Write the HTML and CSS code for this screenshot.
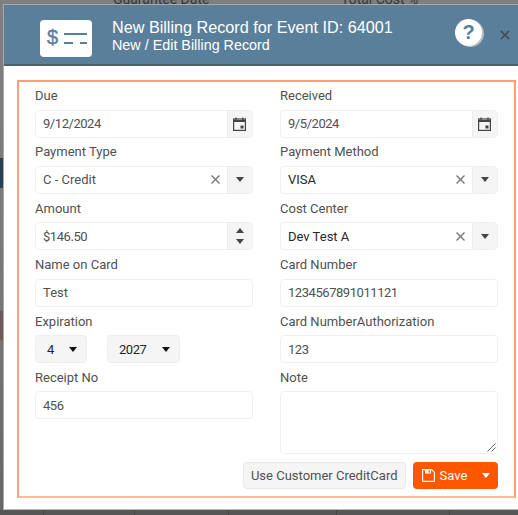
FILE: index.html
```html
<!doctype html>
<html>

<head>
    <link rel="stylesheet" href="styles.css">
</head>

<body>
    <div class="page-behind">
        <span class="back-label back-left">Guarantee Date</span>
        <span class="back-label back-right">Total Cost %</span>
        <span class="back-block back-navy"></span>
        <span class="back-block back-brown"></span>
        <div class="back-foot">
            <span class="back-cell"></span>
            <span class="back-cell"></span>
            <span class="back-cell"></span>
            <span class="back-cell"></span>
            <span class="back-cell"></span>
        </div>
    </div>
    <div class="window">
        <div class="titlebar">
            <div class="logo">
                <svg width="52" height="37" viewBox="0 0 52 37">
                    <rect x="0" y="0" width="52" height="37" rx="4" fill="#fff" />
                    <text x="7" y="24" class="logo-text">$</text>
                    <rect x="24" y="13" width="23" height="2" fill="#5a7f9b" />
                    <rect x="24" y="22" width="9" height="2" fill="#5a7f9b" />
                    <rect x="40" y="22" width="7" height="2" fill="#5a7f9b" />
                </svg>
            </div>
            <div class="titles">
                <div class="title-main">New Billing Record for Event ID: 64001</div>
                <div class="title-sub">New / Edit Billing Record</div>
            </div>
            <div class="help">?</div>
            <svg class="close" width="10" height="10" viewBox="0 0 10 10">
                <path d="M1 1 L9 9 M9 1 L1 9" stroke="#3f4a52" stroke-width="1.6" />
            </svg>
        </div>
        <div class="content">
            <div class="form-box">
                <div class="form-grid">
                    <div class="field">
                        <label>Due</label>
                        <div class="widget">
                            <span class="value num">9/12/2024</span>
                            <span class="side">
                                <svg width="13" height="14" viewBox="0 0 13 14">
                                    <path d="M3 0.5 V3 M10 0.5 V3" stroke="#444" stroke-width="1.3" fill="none" />
                                    <rect x="0.6" y="2" width="11.8" height="11.4" fill="none" stroke="#444" stroke-width="1.2" />
                                    <rect x="0.6" y="3" width="11.8" height="2" fill="#444" />
                                    <rect x="7.5" y="8.5" width="3" height="3" fill="#444" />
                                </svg>
                            </span>
                        </div>
                    </div>
                    <div class="field">
                        <label>Received</label>
                        <div class="widget">
                            <span class="value num">9/5/2024</span>
                            <span class="side">
                                <svg width="13" height="14" viewBox="0 0 13 14">
                                    <path d="M3 0.5 V3 M10 0.5 V3" stroke="#444" stroke-width="1.3" fill="none" />
                                    <rect x="0.6" y="2" width="11.8" height="11.4" fill="none" stroke="#444" stroke-width="1.2" />
                                    <rect x="0.6" y="3" width="11.8" height="2" fill="#444" />
                                    <rect x="7.5" y="8.5" width="3" height="3" fill="#444" />
                                </svg>
                            </span>
                        </div>
                    </div>
                    <div class="field">
                        <label>Payment Type</label>
                        <div class="widget">
                            <span class="value">C - Credit</span>
                            <svg class="clear" width="9" height="9" viewBox="0 0 9 9">
                                <path d="M0.5 0.5 L8.5 8.5 M8.5 0.5 L0.5 8.5" stroke="#777" stroke-width="1.4" />
                            </svg>
                            <span class="side"><span class="arrow-down"></span></span>
                        </div>
                    </div>
                    <div class="field">
                        <label>Payment Method</label>
                        <div class="widget">
                            <span class="value dark">VISA</span>
                            <svg class="clear" width="9" height="9" viewBox="0 0 9 9">
                                <path d="M0.5 0.5 L8.5 8.5 M8.5 0.5 L0.5 8.5" stroke="#777" stroke-width="1.4" />
                            </svg>
                            <span class="side"><span class="arrow-down"></span></span>
                        </div>
                    </div>
                    <div class="field">
                        <label>Amount</label>
                        <div class="widget">
                            <span class="value num">$146.50</span>
                            <span class="side spinner">
                                <span class="arrow-up"></span>
                                <span class="arrow-down"></span>
                            </span>
                        </div>
                    </div>
                    <div class="field">
                        <label>Cost Center</label>
                        <div class="widget">
                            <span class="value dark">Dev Test A</span>
                            <svg class="clear" width="9" height="9" viewBox="0 0 9 9">
                                <path d="M0.5 0.5 L8.5 8.5 M8.5 0.5 L0.5 8.5" stroke="#777" stroke-width="1.4" />
                            </svg>
                            <span class="side"><span class="arrow-down"></span></span>
                        </div>
                    </div>
                    <div class="field">
                        <label>Name on Card</label>
                        <div class="widget"><span class="value">Test</span></div>
                    </div>
                    <div class="field">
                        <label>Card Number</label>
                        <div class="widget"><span class="value num">1234567891011121</span></div>
                    </div>
                    <div class="field">
                        <label>Expiration</label>
                        <div class="picks">
                            <div class="pick pick-month"><span>4</span><span class="arrow-down black"></span></div>
                            <div class="pick pick-year"><span class="num">2027</span><span class="arrow-down black"></span></div>
                        </div>
                    </div>
                    <div class="field">
                        <label>Card NumberAuthorization</label>
                        <div class="widget"><span class="value num">123</span></div>
                    </div>
                    <div class="field">
                        <label>Receipt No</label>
                        <div class="widget"><span class="value num">456</span></div>
                    </div>
                    <div class="field">
                        <label>Note</label>
                        <div class="widget note">
                            <svg class="grip" width="9" height="9" viewBox="0 0 9 9">
                                <path d="M0.5 8.5 L8.5 0.5 M4.5 8.5 L8.5 4.5" stroke="#555" stroke-width="0.9" />
                            </svg>
                        </div>
                    </div>
                </div>
                <div class="actions">
                    <button class="btn-plain">Use Customer CreditCard</button>
                    <div class="btn-save">
                        <svg width="13" height="13" viewBox="0 0 13 13">
                            <path d="M0.6 0.6 H9.6 L12.4 3.4 V12.4 H0.6 Z" fill="none" stroke="#fff" stroke-width="1.1" />
                            <rect x="3" y="0.6" width="6" height="4" fill="#fff" />
                            <rect x="6.6" y="1.2" width="1.3" height="2.6" fill="#ff5600" />
                        </svg>
                        <span class="save-text">Save</span>
                        <span class="arrow-down white"></span>
                    </div>
                </div>
            </div>
        </div>
    </div>
</body>

</html>
```

FILE: styles.css
```css
* {
    box-sizing: border-box;
    margin: 0;
    padding: 0;
}

body {
    width: 518px;
    height: 515px;
    overflow: hidden;
    background: #7f7f7f;
    font-family: 'Roboto', sans-serif;
    font-size: 13px;
    color: #515151;
    position: relative;
}

/* the dimmed page behind the window */
.page-behind {
    position: absolute;
    inset: 0;
    background: linear-gradient(#7f7f7f, #777 60%, #666);
}

.back-label {
    position: absolute;
    top: -9px;
    color: #363636;
    font-size: 14px;
}

.back-left {
    left: 113px;
}

.back-right {
    left: 341px;
}

.back-block {
    position: absolute;
    left: 0;
    width: 4px;
}

.back-navy {
    top: 158px;
    height: 30px;
    background: #2b4152;
}

.back-brown {
    top: 311px;
    height: 29px;
    background: #6d5a58;
}

.back-foot {
    position: absolute;
    left: 0;
    right: 0;
    bottom: 0;
    height: 5px;
    background: #565656;
    display: grid;
    grid-template-columns: 44px 91px 94px 108px 113px;
}

.back-cell {
    border-right: 1px solid #474747;
}

.window {
    position: absolute;
    top: 4px;
    left: 3px;
    width: 515px;
    height: 506px;
    background: #fff;
    border: 1px solid #a9a9a9;
    border-right: none;
    border-bottom-color: #bbb;
}

.titlebar {
    height: 61px;
    background: #5a7f9b;
    border-bottom: 2px solid #4e5f6c;
    color: #fff;
    display: flex;
    align-items: flex-start;
    position: relative;
}

.logo {
    margin: 15px 0 0 36px;
    height: 37px;
    line-height: 0;
}

.logo-text {
    font-family: 'Liberation Sans', sans-serif;
    font-size: 20px;
    fill: #5a7f9b;
    stroke: #5a7f9b;
    stroke-width: 0.4px;
}

.titles {
    margin: 12px 0 0 20px;
    font-family: 'Liberation Sans', sans-serif;
}

.title-main {
    font-size: 16.2px;
    line-height: 20px;
}

.title-sub {
    font-size: 14.35px;
    line-height: 17px;
}

.help {
    position: absolute;
    top: 14px;
    left: 451px;
    width: 27px;
    height: 27px;
    border-radius: 50%;
    background: #fff;
    color: #5a7f9b;
    font-family: 'Liberation Sans', sans-serif;
    font-size: 20px;
    font-weight: bold;
    line-height: 27px;
    text-align: center;
    box-shadow: 2px 1px 0 #b9bcc0;
}

.close {
    position: absolute;
    top: 25px;
    left: 496px;
}

.content {
    padding: 14px 2px 0 13px;
}

.form-box {
    height: 418px;
    border: 2px solid #ff9f73;
    border-bottom-color: #ffb899;
    padding: 5px 16.5px 0 16px;
}

.form-grid {
    display: grid;
    grid-template-columns: 217.5px 217.5px;
    column-gap: 27.5px;
    row-gap: 5.9px;
}

.field label {
    display: block;
    font-size: 13px;
    line-height: 17px;
    margin-bottom: 5.5px;
    color: #515151;
}

.widget {
    height: 28px;
    display: flex;
    align-items: center;
    background: #fff;
    border: 1px solid #f0f0f0;
    border-radius: 4px;
    overflow: hidden;
}

.value {
    flex: 1;
    padding-left: 7px;
    color: #515151;
}

.num {
    letter-spacing: -0.45px;
}

.dark {
    color: #272727;
}

.side {
    width: 25px;
    height: 100%;
    background: #f5f5f5;
    border-left: 1px solid #ececec;
    display: flex;
    align-items: center;
    justify-content: center;
    flex-shrink: 0;
}

.clear {
    margin-right: 7px;
}

.spinner {
    flex-direction: column;
    gap: 6px;
}

.arrow-down {
    width: 0;
    height: 0;
    border-left: 4px solid transparent;
    border-right: 4px solid transparent;
    border-top: 5px solid #444;
}

.arrow-up {
    width: 0;
    height: 0;
    border-left: 4px solid transparent;
    border-right: 4px solid transparent;
    border-bottom: 5px solid #444;
}

.black {
    border-top-color: #111;
}

.white {
    border-top-color: #fff;
}

.picks {
    display: flex;
    gap: 20px;
}

.pick {
    height: 28px;
    background: #f5f5f5;
    border: 1px solid #eee;
    border-radius: 4px;
    display: flex;
    align-items: center;
    justify-content: space-between;
    color: #272727;
}

.pick-month {
    width: 52px;
    padding: 0 9px 0 11px;
}

.pick-year {
    width: 73px;
    padding: 0 9px 0 11px;
}

.note {
    height: 63px;
    position: relative;
}

.grip {
    position: absolute;
    right: 1px;
    bottom: 1px;
}

.actions {
    display: flex;
    justify-content: flex-end;
    gap: 7px;
    margin-top: 7.5px;
}

.btn-plain {
    height: 27px;
    padding: 0 7px;
    background: #f5f5f5;
    border: 1px solid #e8e8e8;
    border-radius: 4px;
    font-family: 'Roboto', sans-serif;
    font-size: 13px;
    color: #515151;
}

.btn-save {
    width: 85px;
    height: 27px;
    background: #ff5600;
    border-radius: 4px;
    color: #fff;
    display: flex;
    align-items: center;
    padding: 0 8px 0 9px;
}

.save-text {
    margin-left: 5px;
    flex: 1;
}
```
